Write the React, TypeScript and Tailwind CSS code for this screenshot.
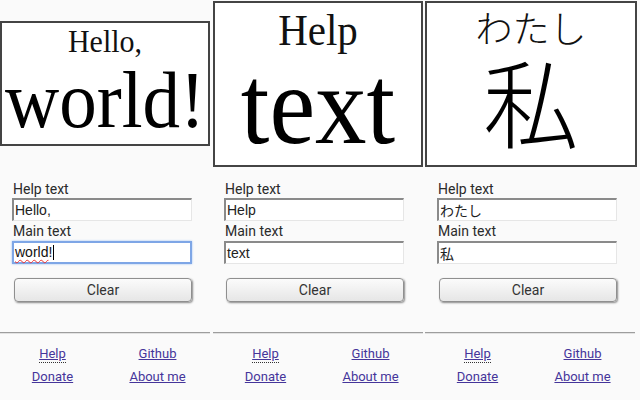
import React from "react";

const sans = { fontFamily: 'Roboto, "Noto Sans CJK JP", sans-serif' };

function Field({ value, focused, cjk }: { value: string; focused?: boolean; cjk?: boolean }) {
  if (focused) {
    return (
      <div className="h-[23px] w-[180px] border-2 border-[#7ea6e6] bg-white pl-[1px] flex items-center text-[14px] text-[#111] shadow-[0_0_2px_#9cc0f5]" style={{ fontFamily: '"Liberation Sans", sans-serif' }}>
        <span className="underline decoration-wavy decoration-[#e33] decoration-1 underline-offset-2">world</span>
        <span>!</span>
        <span className="ml-[1px] inline-block h-[15px] w-[1px] bg-black" />
      </div>
    );
  }
  return (
    <div
      className="h-[23px] w-[180px] border-t-2 border-l-2 border-r border-b border-t-[#8a8a8a] border-l-[#8a8a8a] border-r-[#e6e6e6] border-b-[#e6e6e6] bg-white pl-[1px] flex items-center text-[14px] text-[#222]"
      style={{ fontFamily: cjk ? '"Noto Sans CJK JP", sans-serif' : '"Liberation Sans", sans-serif' }}
    >
      {value}
    </div>
  );
}

function Form({ help, main, focused, cjk, pl }: { help: string; main: string; focused?: boolean; cjk?: boolean; pl: string }) {
  return (
    <div className={`flex flex-col ${pl} pt-[12px]`} style={sans}>
      <div className="h-[18px] text-[14px] leading-[18px] text-[#2a2a2a] pl-[1px]">Help text</div>
      <Field value={help} cjk={cjk} />
      <div className="h-[19px] text-[14px] leading-[19px] text-[#2a2a2a] pl-[1px] mt-[1px]">Main text</div>
      {focused ? <Field value={main} focused /> : <Field value={main} cjk={cjk} />}
      <button className="mt-[14px] ml-[2px] h-[24px] w-[178px] rounded-[4px] border border-[#8f8f8f] bg-gradient-to-b from-[#fbfbfb] to-[#e6e6e6] text-[14px] text-[#333] shadow-[1px_1px_2px_rgba(0,0,0,0.45)]" style={sans}>
        Clear
      </button>
    </div>
  );
}

function Footer({ w }: { w: string }) {
  const link = "text-[13px] leading-[16px] text-[#45359a] underline decoration-[#45359a]";
  return (
    <div className="flex flex-col" style={sans}>
      <div className={`mt-[30px] ${w} border-t border-b border-t-[#9d9d9d] border-b-[#e2e2e2]`} />
      <div className={`${w} grid grid-cols-2 pt-[12px] gap-y-[6px] justify-items-center`}>
        <span className={`${link} border-b border-dotted border-[#333] pb-0`}>Help</span>
        <span className={link}>Github</span>
        <span className={link}>Donate</span>
        <span className={link}>About me</span>
      </div>
    </div>
  );
}

export default function App() {
  const serif = { fontFamily: '"Liberation Serif", "Noto Sans CJK JP", serif' };
  return (
    <div className="w-[640px] h-[400px] bg-[#fafafa] flex flex-row overflow-hidden">
      {/* Panel 1 */}
      <div className="w-[212px] flex flex-col shrink-0">
        <div className="h-[168px] flex items-center">
          <div className="mt-[-1px] h-[125px] w-[210px] border-2 border-[#444] bg-white flex flex-col items-center text-black" style={serif}>
            <span className="mt-[3px] text-[30px] leading-[30px] inline-block scale-y-[1.08] text-[#111]">Hello,</span>
            <span className="mt-[6px] text-[75px] leading-[75px] inline-block scale-y-[1.08]">world!</span>
          </div>
        </div>
        <Form help="Hello," main="world!" focused pl="pl-[12px]" />
        <Footer w="w-[210px]" />
      </div>
      {/* Panel 2 */}
      <div className="w-[212px] flex flex-col shrink-0">
        <div className="h-[168px] flex items-center pl-[1px]">
          <div className="h-[166px] w-[210px] border-2 border-[#444] bg-white flex flex-col items-center text-black" style={serif}>
            <span className="mt-[7px] text-[41px] leading-[41px] inline-block scale-y-[1.08] text-[#111]">Help</span>
            <span className="mt-[3px] text-[103px] leading-[103px] inline-block scale-y-[1.08]">text</span>
          </div>
        </div>
        <Form help="Help" main="text" pl="pl-[12px]" />
        <div className="pl-[1px]">
          <Footer w="w-[210px]" />
        </div>
      </div>
      {/* Panel 3 */}
      <div className="w-[216px] flex flex-col shrink-0">
        <div className="h-[168px] flex items-center pl-[1px]">
          <div className="h-[166px] w-[212px] border-2 border-[#444] bg-white flex flex-col items-center text-black" style={{ fontFamily: '"Noto Sans CJK JP", sans-serif' }}>
            <span className="mt-[2px] text-[37px] leading-[44px] font-light text-[#111]">わたし</span>
            <span className="mt-[-4px] text-[96px] leading-[110px] font-light">私</span>
          </div>
        </div>
        <Form help="わたし" main="私" cjk pl="pl-[13px]" />
        <div className="pl-[1px]">
          <Footer w="w-[210px]" />
        </div>
      </div>
    </div>
  );
}
